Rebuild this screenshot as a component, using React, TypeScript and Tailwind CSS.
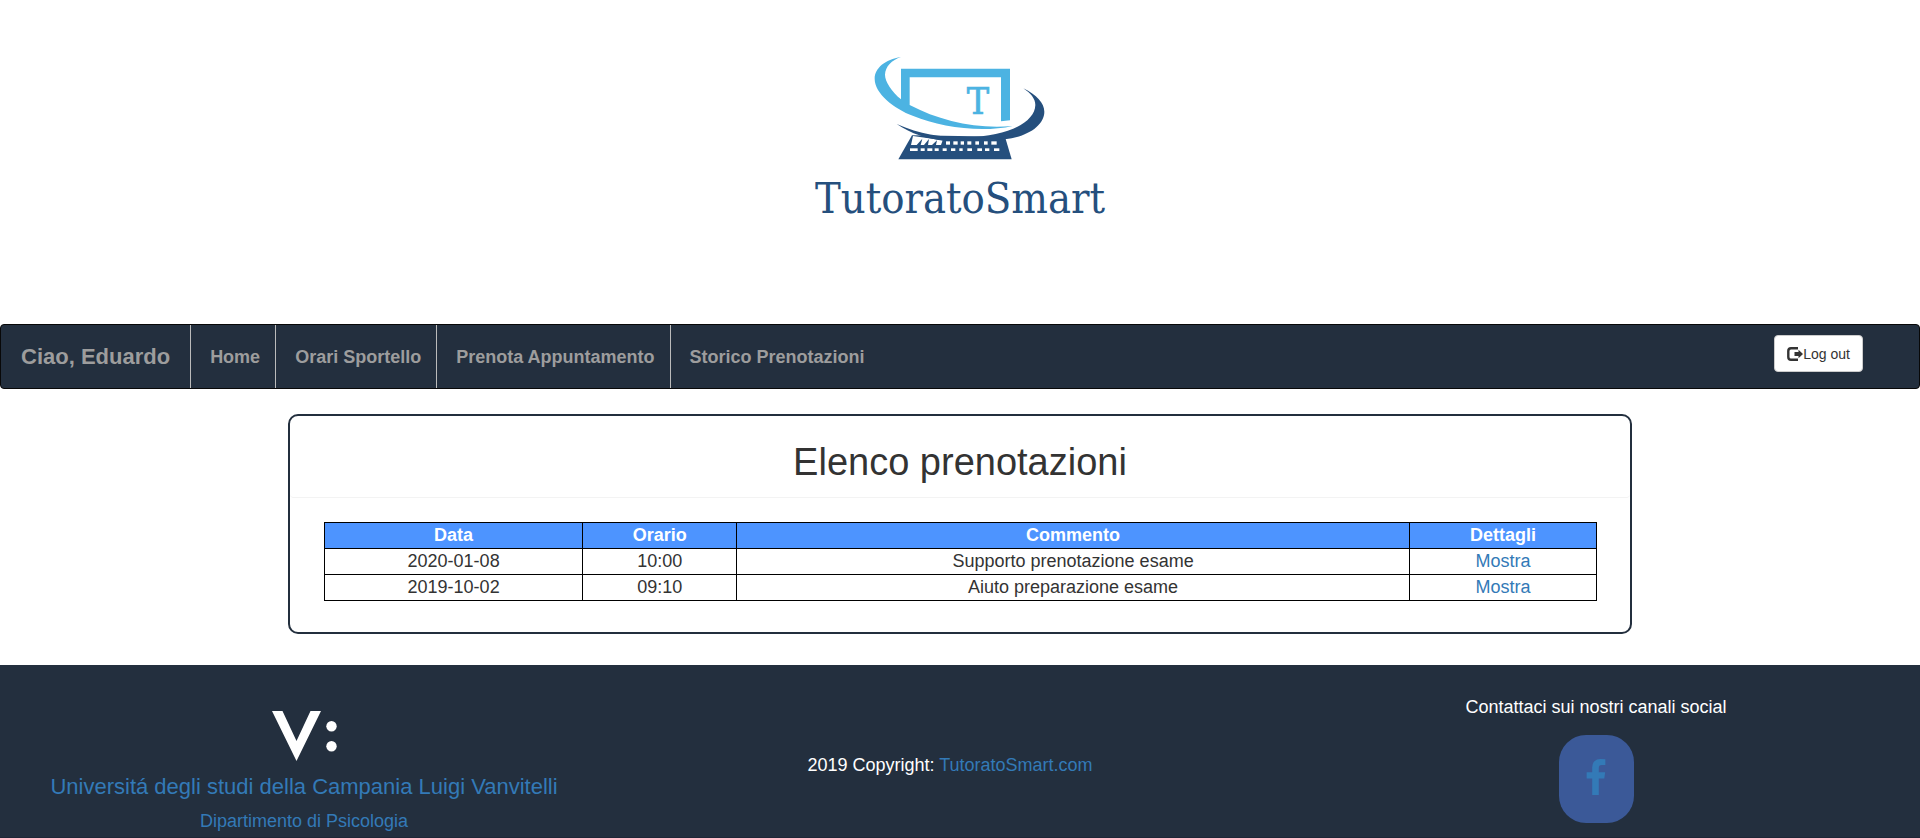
import React from "react";

const bookings = [
  { date: "2020-01-08", time: "10:00", comment: "Supporto prenotazione esame" },
  { date: "2019-10-02", time: "09:10", comment: "Aiuto preparazione esame" },
];

const navItems = ["Home", "Orari Sportello", "Prenota Appuntamento", "Storico Prenotazioni"];

const upperKeys = [
  [468, 12], [490, 13], [512, 10], [532, 12], [556, 11], [582, 11], [604, 16],
];
const lowerKeys = [
  [360, 23], [392, 12], [412, 15], [434, 12], [458, 12], [483, 13],
  [508, 10], [532, 14], [562, 14], [585, 13], [612, 16],
];

function Logo() {
  return (
    <svg viewBox="240 39 540 330" className="h-[110px] w-[180px]" aria-hidden="true">
      <path
        fill="#4cb3e2"
        d="M333 51C285 58 254 85 254 116C254 160 310 205 370 228C450 260 570 280 668 258C560 268 450 243 359 195V112H633V244L660 241V86H333V178C305 155 285 125 285 104C286 80 305 60 333 51Z"
      />
      <text
        x="564"
        y="223"
        textAnchor="middle"
        fontSize="112"
        fill="#4cb3e2"
        stroke="#4cb3e2"
        strokeWidth="2"
        fontFamily="'DejaVu Serif Condensed', 'DejaVu Serif', serif"
      >
        T
      </text>
      <path fill="#254f7d" d="M366 286L325 358H665L645 290Z" />
      <path
        fill="#fff"
        d="M369 288L458 301L453 315H438L441 301L426 315H414L417 297L402 315H392L397 296L380 315H363Z"
      />
      {upperKeys.map(([x, w]) => (
        <rect key={x} x={x} y="304" width={w} height="10" fill="#fff" />
      ))}
      {lowerKeys.map(([x, w]) => (
        <rect key={x} x={x} y="325" width={w} height="8" fill="#fff" />
      ))}
      <path
        fill="#254f7d"
        d="M320 252C395 285 460 292 530 291C650 290 735 248 736 195C736 176 722 160 700 145C740 165 763 190 763 215C763 258 710 290 645 298L600 302H460C410 296 365 282 320 252Z"
      />
    </svg>
  );
}

function LogOutIcon() {
  return (
    <svg viewBox="0 0 16 14" className="h-3.5 w-4 shrink-0" aria-hidden="true">
      <path fill="none" stroke="#333" strokeWidth="2.4" d="M11 1.3H4Q1.3 1.3 1.3 4V10Q1.3 12.7 4 12.7H11" />
      <path fill="#333" d="M7.5 5H11.5V2.8L16 7L11.5 11.2V9H7.5Z" />
    </svg>
  );
}

function UniversityMark() {
  return (
    <svg viewBox="0 0 65 50" className="h-[50px] w-[65px]" aria-hidden="true">
      <path fill="#fff" d="M0 0H10.500L24.500 30L38.500 0H49L24.500 50Z" />
      <ellipse cx="59.500" cy="15.200" rx="5.200" ry="5.200" fill="#fff" />
      <ellipse cx="59.500" cy="35.200" rx="5.200" ry="5.200" fill="#fff" />
    </svg>
  );
}

export default function App() {
  return (
    <div className="bg-white font-['Liberation_Sans',Arial,sans-serif] text-lg leading-[25px] text-[#333]">
      <header className="flex flex-col items-center pt-[53px] pb-[99px]">
        <Logo />
        <div className="mt-2 font-['DejaVu_Serif_Condensed','DejaVu_Serif',serif] text-[43px] leading-[54px] text-[#254f7d]">
          TutoratoSmart
        </div>
      </header>

      <nav className="flex items-stretch rounded border border-[#080808] bg-[#232f3e] font-bold text-[#9d9d9d]">
        <a href="#" className="flex h-[63px] items-center border-r border-[#bbb] px-5 text-[22px]">
          Ciao, Eduardo
        </a>
        <ul className="flex">
          {navItems.map((item) => (
            <li key={item} className="flex border-r border-[#bbb] last:border-r-0">
              <a href="#" className="flex items-center pt-0.5 pr-[15px] pl-[19px]">
                {item}
              </a>
            </li>
          ))}
        </ul>
        <button
          type="button"
          className="mt-2.5 mr-14 ml-auto flex h-[37px] items-center self-start rounded border border-[#ccc] bg-white px-3 text-sm font-normal text-[#333]"
        >
          <LogOutIcon />
          Log out
        </button>
      </nav>

      <main className="mx-auto mt-[25px] w-[70%] rounded-[10px] border-2 border-[#232f3e]">
        <div className="rounded border-b border-[#f3f3f3] pt-[26px] pb-[15px]">
          <h1 className="text-center text-[38px] leading-10">Elenco prenotazioni</h1>
        </div>
        <div className="pt-6 pr-[33px] pb-[31px] pl-[34px]">
          <table className="w-full table-fixed border-collapse text-center">
            <colgroup>
              <col className="w-[20.3%]" />
              <col className="w-[12.1%]" />
              <col />
              <col className="w-[14.7%]" />
            </colgroup>
            <thead>
              <tr className="bg-[#4d94ff] text-white">
                {["Data", "Orario", "Commento", "Dettagli"].map((title) => (
                  <th key={title} scope="col" className="border border-black p-0 font-bold">
                    {title}
                  </th>
                ))}
              </tr>
            </thead>
            <tbody>
              {bookings.map((b) => (
                <tr key={b.date}>
                  <td className="border border-black p-0">{b.date}</td>
                  <td className="border border-black p-0">{b.time}</td>
                  <td className="border border-black p-0">{b.comment}</td>
                  <td className="border border-black p-0">
                    <a href="#" className="text-[#337ab7]">
                      Mostra
                    </a>
                  </td>
                </tr>
              ))}
            </tbody>
          </table>
        </div>
      </main>

      <footer className="mt-[31px] grid grid-cols-[16fr_18fr_16fr] border-b border-[#1f2636] bg-[#232f3e] pr-5 text-center text-white">
        <div className="flex flex-col items-center pt-[46px] text-[#337ab7]">
          <UniversityMark />
          <a href="#" className="mt-3 text-[22px] leading-7">
            Universitá degli studi della Campania Luigi Vanvitelli
          </a>
          <a href="#" className="mt-2">
            Dipartimento di Psicologia
          </a>
        </div>
        <p className="pt-[88px]">
          2019 Copyright:{" "}
          <a href="#" className="text-[#337ab7]">
            TutoratoSmart.com
          </a>
        </p>
        <div className="flex flex-col items-center pt-[30px] pb-3.5">
          <p>Contattaci sui nostri canali social</p>
          <a
            href="#"
            aria-label="Facebook"
            className="mt-[15px] flex h-22 w-[75px] items-center justify-center rounded-[27px] bg-[#3b5998] pb-1"
          >
            <svg viewBox="479 0 864 1664" className="h-9 w-5" aria-hidden="true">
              <path
                fill="#337ab7"
                d="M1343 12v264h-157q-86 0-116 36t-30 108v189h293l-39 296h-254v759h-306v-759h-255v-296h255v-218q0-186 104-288.500t277-102.500q147 0 228 12z"
              />
            </svg>
          </a>
        </div>
      </footer>
    </div>
  );
}
